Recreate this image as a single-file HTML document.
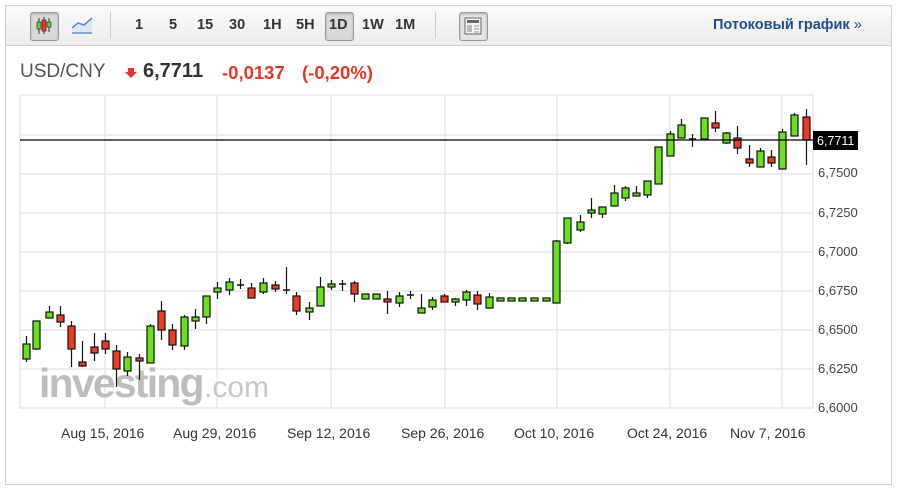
<!DOCTYPE html>
<html><head><meta charset="utf-8">
<style>
body{margin:0;width:899px;height:492px;background:#fff;font-family:"Liberation Sans",Arial,sans-serif;position:relative;overflow:hidden}
.frame{position:absolute;left:5px;top:5px;width:887px;height:480px;border:1px solid #cfcfcf;box-sizing:border-box}
.tb{position:absolute;left:6px;top:6px;width:885px;height:39px;background:linear-gradient(#fbfbfb,#ececec);border-bottom:1px solid #cfcfcf}
.t{position:absolute;top:17px;font-size:14.5px;font-weight:bold;color:#333}
.sep{position:absolute;top:12px;width:1px;height:26px;background:#ccc}
.btn{position:absolute;border:1px solid #999;border-radius:3px;background:#d9d9d9;box-shadow:inset 0 1px 2px #aaa}
.title{position:absolute;top:61px;font-size:19px;white-space:nowrap}
.yl{position:absolute;left:818px;font-size:13px;color:#444}
.xl{position:absolute;top:425px;font-size:14px;color:#333;white-space:nowrap}
</style></head><body>
<div class="frame"></div>
<div class="tb"></div>
<div class="btn" style="left:30px;top:12px;width:27px;height:27px"></div>
<svg style="position:absolute;left:30px;top:12px" width="28" height="28">
<line x1="9" y1="6" x2="9" y2="22" stroke="#333"/><rect x="7" y="10" width="4" height="7" fill="#6c3" stroke="#333" stroke-width=".7"/>
<line x1="14" y1="5" x2="14" y2="22" stroke="#333"/><rect x="12" y="8" width="4" height="11" fill="#e33" stroke="#333" stroke-width=".7"/>
<line x1="19" y1="6" x2="19" y2="20" stroke="#333"/><rect x="17" y="10" width="4" height="5" fill="#6c3" stroke="#333" stroke-width=".7"/>
</svg>
<svg style="position:absolute;left:70px;top:14px" width="26" height="22">
<path d="M2 14 L8 9 L14 11 L22 4 L22 18 L2 18 Z" fill="#dbe7f3"/>
<path d="M2 14 L8 9 L14 11 L22 4" fill="none" stroke="#5a8cc8" stroke-width="1.6"/>
<line x1="2" y1="19" x2="22" y2="19" stroke="#5a8cc8" stroke-width="1.5"/>
</svg>
<div class="sep" style="left:110px"></div>
<div class="t" style="left:135px">1</div>
<div class="t" style="left:169px">5</div>
<div class="t" style="left:197px">15</div>
<div class="t" style="left:229px">30</div>
<div class="t" style="left:263px">1H</div>
<div class="t" style="left:296px">5H</div>
<div class="btn" style="left:325px;top:12px;width:27px;height:27px"></div>
<div class="t" style="left:329px">1D</div>
<div class="t" style="left:362px">1W</div>
<div class="t" style="left:395px">1M</div>
<div class="sep" style="left:435px"></div>
<div class="btn" style="left:459px;top:12px;width:27px;height:27px;background:#e4e4e4"></div>
<svg style="position:absolute;left:464px;top:17px" width="18" height="18">
<rect x="1" y="1" width="16" height="16" fill="#f4f4f4" stroke="#666"/>
<rect x="3" y="3" width="12" height="3" fill="#666"/>
<rect x="3" y="8" width="5" height="7" fill="#bbb"/>
<line x1="10" y1="9" x2="15" y2="9" stroke="#999"/><line x1="10" y1="12" x2="15" y2="12" stroke="#999"/><line x1="10" y1="15" x2="15" y2="15" stroke="#999"/>
</svg>
<div class="t" style="left:713px;top:17px;color:#1c4f8c;font-size:14.5px">Потоковый график <span style="font-weight:normal">»</span></div>

<div class="title" style="left:20px;color:#555">USD/CNY</div>
<svg style="position:absolute;left:125px;top:67px" width="12" height="12"><path d="M3 1 H9 V5 H12 L6 11 L0 5 H3 Z" fill="#e5372b"/></svg>
<div class="title" style="left:143px;color:#333;font-weight:bold;font-size:20px;top:60px">6,7711</div>
<div class="title" style="left:222px;color:#e5372b;font-size:18.5px;top:62px;font-weight:bold">-0,0137</div>
<div class="title" style="left:302px;color:#e5372b;font-size:18.5px;top:62px;font-weight:bold">(-0,20%)</div>

<svg id="ch" style="position:absolute;left:0;top:0" width="899" height="492">
<g stroke="#e6e9f0" stroke-width="1.5" fill="none">
<rect x="20" y="95" width="793" height="313"/>
<line x1="105" y1="95" x2="105" y2="408"/><line x1="217" y1="95" x2="217" y2="408"/><line x1="331" y1="95" x2="331" y2="408"/><line x1="445" y1="95" x2="445" y2="408"/><line x1="557" y1="95" x2="557" y2="408"/><line x1="670" y1="95" x2="670" y2="408"/><line x1="782" y1="95" x2="782" y2="408"/>
<line x1="20" y1="135" x2="813" y2="135"/><line x1="20" y1="174" x2="813" y2="174"/><line x1="20" y1="213" x2="813" y2="213"/><line x1="20" y1="252" x2="813" y2="252"/><line x1="20" y1="291" x2="813" y2="291"/><line x1="20" y1="330" x2="813" y2="330"/><line x1="20" y1="369" x2="813" y2="369"/>
</g>
<text x="39" y="397" font-family="Liberation Sans,Arial,sans-serif" font-weight="bold" font-size="41" fill="#bdbdbd" letter-spacing="-1.8">investing</text>
<text x="204" y="397" font-family="Liberation Sans,Arial,sans-serif" font-size="30" fill="#c8c8c8">.com</text>
<g id="cd"></g>
<line x1="20" y1="140" x2="813" y2="140" stroke="#000" stroke-width="1.2"/>
<rect x="813" y="131" width="45" height="19" fill="#000"/>
<text x="817" y="145" font-family="Liberation Sans,Arial,sans-serif" font-size="12.5" fill="#fff">6,7711</text>
</svg>
<div class="yl" style="top:165px">6,7500</div>
<div class="yl" style="top:205px">6,7250</div>
<div class="yl" style="top:244px">6,7000</div>
<div class="yl" style="top:283px">6,6750</div>
<div class="yl" style="top:322px">6,6500</div>
<div class="yl" style="top:361px">6,6250</div>
<div class="yl" style="top:400px">6,6000</div>
<div class="xl" style="left:61px">Aug 15, 2016</div>
<div class="xl" style="left:173px">Aug 29, 2016</div>
<div class="xl" style="left:287px">Sep 12, 2016</div>
<div class="xl" style="left:401px">Sep 26, 2016</div>
<div class="xl" style="left:514px">Oct 10, 2016</div>
<div class="xl" style="left:627px">Oct 24, 2016</div>
<div class="xl" style="left:730px">Nov 7, 2016</div>
<script>
var d=[[25.7,344,359,336,362,'g'],[36,321,349,321,350,'g'],[48.7,312,318,306,318,'g'],[59.7,315,322,306,327,'r'],[71,326,349,321,367,'r'],[81.7,362,366,341,367,'r'],[93.7,347,353,333,361,'r'],[104.7,341,349,333,354,'r'],[115.7,351,369,345,387,'r'],[126.7,357,371,352,376,'g'],[139.3,358,360,354,380,'r'],[150,326,363,324,363,'g'],[160.7,311,330,301,340,'r'],[171.7,330,345,324,350,'r'],[184,317,346,315,350,'g'],[195,317,321,309,329,'g'],[206,296,317,296,324,'g'],[217,288,292,282,299,'g'],[229.3,282,290,278,295,'g'],[240.3,285,286,279,289,'d'],[251.3,288,298,283,298,'r'],[263.3,283,292,278,294,'g'],[274.7,285,289,281,292,'r'],[285.7,290,290,267,294,'d'],[296,296,311,292,315,'r'],[309,308,312,302,320,'g'],[319.7,287,306,277,306,'g'],[330.7,284,287,280,290,'g'],[341.7,284,284,280,291,'d'],[354,283,294,281,302,'r'],[364.7,294,299,294,299,'g'],[376,294,299,294,299,'g'],[386.7,299,301,291,314,'r'],[398.7,296,303,292,307,'g'],[410,295,296,291,299,'d'],[421,308,313,294,313,'g'],[432,300,307,297,310,'g'],[444,296,302,294,302,'r'],[455,299,301,298,306,'g'],[466,292,300,290,306,'g'],[477.3,295,304,291,310,'r'],[489.3,297,308,293,309,'g'],[500,298,301,298,301,'g'],[511,298,301,298,301,'g'],[522,298,301,298,301,'g'],[534,298,301,298,301,'g'],[545.7,298,301,298,301,'g'],[556.3,241,303,240,303,'g'],[567.3,218,243,218,244,'g'],[579.7,222,230,215,232,'g'],[590.7,210,213,198,218,'g'],[601.7,207,214,207,218,'g'],[614,193,206,185,206,'g'],[624.7,188,198,186,201,'g'],[636,193,196,186,196,'g'],[646.7,181,195,181,198,'g'],[658.3,147,184,147,184,'g'],[670,134,156,131,156,'g'],[681,125,138,119,138,'g'],[692,139,140,134,147,'d'],[704,118,139,118,139,'g'],[715,123,128,111,132,'r'],[726,133,143,132,144,'g'],[737.3,138,148,126,154,'r'],[749.3,159,163,145,167,'r'],[760,151,167,148,167,'g'],[770.7,157,163,150,167,'r'],[782.3,132,169,129,169,'g'],[794.3,115,136,113,136,'g'],[805.7,117,140,109,165,'r']];
var s='';d.forEach(function(c){var x=Math.round(c[0])+0.5;
s+='<line x1="'+x+'" y1="'+c[3]+'" x2="'+x+'" y2="'+c[4]+'" stroke="#111" stroke-width="1.2"/>';
if(c[5]=='d'){s+='<line x1="'+(x-3.5)+'" y1="'+c[1]+'" x2="'+(x+3.5)+'" y2="'+c[1]+'" stroke="#111" stroke-width="1.5"/>';}
else{var h=Math.max(c[2]-c[1],3);s+='<rect x="'+(x-3.5)+'" y="'+c[1]+'" width="7" height="'+h+'" fill="'+(c[5]=='g'?'#66e01f':'#ec3b25')+'" stroke="#111" stroke-width="1.2"/>';}});
document.getElementById('cd').innerHTML=s;
</script>
</body></html>
